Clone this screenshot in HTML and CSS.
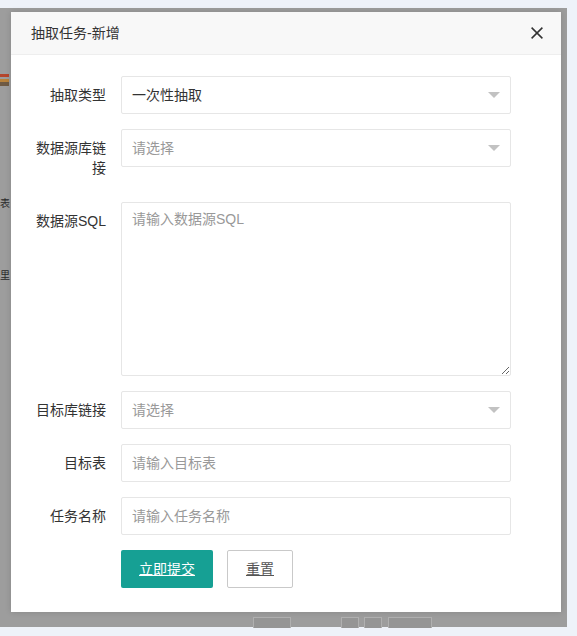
FILE: index.html
```html
<!DOCTYPE html>
<html lang="zh-CN">
<head>
<meta charset="utf-8">
<title>抽取任务-新增</title>
<link rel="stylesheet" href="styles.css">
</head>
<body>
<div class="shade">
  <span class="bg-bit bit-icon"></span>
  <span class="bg-bit bit-text1">表</span>
  <span class="bg-bit bit-text2">里</span>
  <span class="bg-bit bit-btn b1"></span>
  <span class="bg-bit bit-btn b2"></span>
  <span class="bg-bit bit-btn b3"></span>
  <span class="bg-bit bit-btn b4"></span>
</div>
<div class="layer">
  <div class="layer-title">
    <span class="title-text">抽取任务-新增</span>
    <span class="close" aria-label="关闭">
      <svg width="12" height="12" viewBox="0 0 12 12"><path d="M0.6 0.6 L11.4 11.4 M11.4 0.6 L0.6 11.4" stroke="#333" stroke-width="1.5" fill="none"/></svg>
    </span>
  </div>
  <form class="form">
    <div class="form-item">
      <label class="form-label">抽取类型</label>
      <div class="input-block">
        <div class="select"><span class="val">一次性抽取</span><i class="edge"></i></div>
      </div>
    </div>
    <div class="form-item">
      <label class="form-label">数据源库链接</label>
      <div class="input-block">
        <div class="select"><span class="ph">请选择</span><i class="edge"></i></div>
      </div>
    </div>
    <div class="form-item">
      <label class="form-label">数据源SQL</label>
      <div class="input-block">
        <textarea class="textarea" placeholder="请输入数据源SQL"></textarea>
      </div>
    </div>
    <div class="form-item">
      <label class="form-label">目标库链接</label>
      <div class="input-block">
        <div class="select"><span class="ph">请选择</span><i class="edge"></i></div>
      </div>
    </div>
    <div class="form-item">
      <label class="form-label">目标表</label>
      <div class="input-block">
        <input class="input" type="text" placeholder="请输入目标表">
      </div>
    </div>
    <div class="form-item">
      <label class="form-label">任务名称</label>
      <div class="input-block">
        <input class="input" type="text" placeholder="请输入任务名称">
      </div>
    </div>
    <div class="form-item buttons">
      <div class="input-block btn-row">
        <a class="btn btn-primary">立即提交</a>
        <a class="btn btn-primary-outline">重置</a>
      </div>
    </div>
  </form>
</div>
</body>
</html>
```

FILE: styles.css
```css
html, body {
  margin: 0;
  padding: 0;
}
body {
  width: 577px;
  height: 636px;
  background: #eef2f9;
  position: relative;
  overflow: hidden;
  font-family: "Liberation Sans", "Noto Sans CJK SC", sans-serif;
  font-size: 14px;
  color: #333;
}

/* dimmed page underneath the dialog */
.shade {
  position: absolute;
  left: 0;
  top: 8px;
  width: 567px;
  height: 619px;
  background-color: #9d9d9d;
}
.bg-bit {
  position: absolute;
}
.bit-icon {
  left: 0;
  top: 66px;
  width: 9px;
  height: 12px;
  background: linear-gradient(#b5452c 0 3px, #9d9d9d 3px 5px, #b8823b 5px 8px, #6e5a44 8px);
}
.bit-text1, .bit-text2 {
  left: 0;
  font-size: 10px;
  line-height: 14px;
  color: #2a2a2a;
}
.bit-text1 { top: 189px; }
.bit-text2 { top: 261px; }
.bit-btn {
  top: 609px;
  height: 10px;
  background: #959595;
  border: 1px solid #b0b0b0;
  border-bottom: none;
}
.b1 { left: 253px; width: 36px; }
.b2 { left: 341px; width: 16px; }
.b3 { left: 364px; width: 16px; }
.b4 { left: 388px; width: 42px; }

/* dialog */
.layer {
  position: absolute;
  left: 11px;
  top: 12px;
  width: 550px;
  height: 600px;
  background: #fff;
  box-shadow: 0 0 6px rgba(0, 0, 0, .15);
}
.layer-title {
  height: 42px;
  line-height: 42px;
  background: #f8f8f8;
  border-bottom: 1px solid #eee;
  display: flex;
  align-items: center;
  justify-content: space-between;
  padding: 0 18px 0 20px;
  color: #333;
  font-size: 14px;
}
.close {
  display: flex;
  width: 12px;
  height: 12px;
}

/* form */
.form {
  padding: 21px 50px 24px 0;
  display: flex;
  flex-direction: column;
  gap: 15px;
}
.form-item {
  display: flex;
  align-items: flex-start;
}
.form-label {
  width: 80px;
  flex: none;
  padding: 9px 15px;
  line-height: 20px;
  text-align: right;
  color: #333;
}
.input-block {
  flex: 1;
  min-width: 0;
}
.buttons .input-block {
  margin-left: 110px;
}
.select, .input, .textarea {
  box-sizing: border-box;
  width: 100%;
  border: 1px solid #e6e6e6;
  border-radius: 2px;
  background: #fff;
  font-family: inherit;
  font-size: 14px;
  color: #333;
  outline: none;
}
.select, .input {
  height: 38px;
  line-height: 36px;
  padding-left: 10px;
}
.select {
  position: relative;
  padding-right: 30px;
}
.val { color: #333; }
.ph { color: #999; }
.edge {
  position: absolute;
  right: 10px;
  top: 50%;
  margin-top: -3px;
  width: 0;
  height: 0;
  border-width: 6px;
  border-style: solid;
  border-color: #c2c2c2 transparent transparent transparent;
}
.input::placeholder, .textarea::placeholder {
  color: #999;
}
.textarea {
  display: block;
  height: 174px;
  padding: 6px 10px;
  line-height: 20px;
  resize: vertical;
}
.btn-row {
  display: flex;
  gap: 14px;
}
.btn {
  box-sizing: border-box;
  height: 38px;
  line-height: 38px;
  padding: 0 18px;
  font-size: 14px;
  border-radius: 2px;
  text-decoration: underline;
  cursor: pointer;
}
.btn-primary {
  background: #16a094;
  color: #fff;
}
.btn-primary-outline {
  background: #fff;
  color: #555;
  border: 1px solid #c9c9c9;
  line-height: 36px;
}
```
